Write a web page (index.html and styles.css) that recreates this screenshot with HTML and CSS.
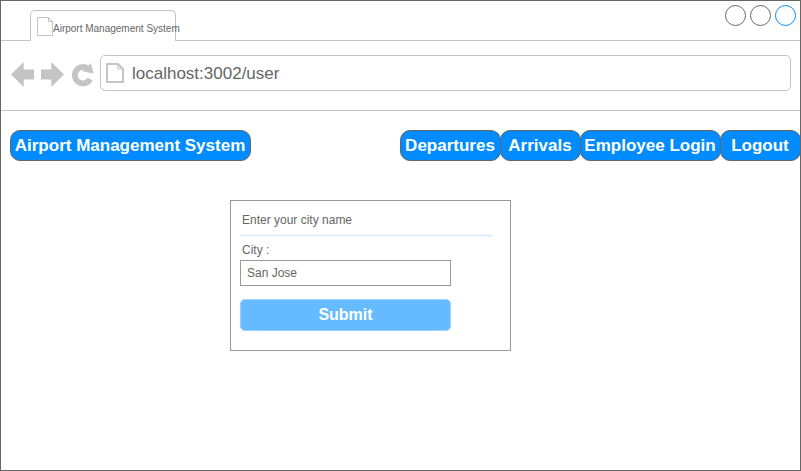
FILE: index.html
```
<!DOCTYPE html>
<html lang="en">
<head>
<meta charset="utf-8">
<title>Airport Management System</title>
<link rel="stylesheet" href="styles.css">
</head>
<body>
<div class="window">
  <header class="tabbar">
    <div class="tab">
      <svg class="tab-icon" width="18" height="20" viewBox="0 0 18 20"><path d="M1.5 .5H12.5L16.5 4.5V18.5H1.5ZM12.5 .5V4.5H16.5" fill="#fff" stroke="#c4c4c4"/></svg>
      <span class="tab-title">Airport Management System</span>
    </div>
    <div class="controls">
      <span class="dot"></span><span class="dot"></span><span class="dot active"></span>
    </div>
  </header>
  <div class="toolbar">
    <svg class="tools" width="88" height="36" viewBox="11 55 88 36" fill="#c4c4c4">
      <path d="M11 74.5L23.7 62V69.4H34V79.6H23.7V87Z"/>
      <path d="M64 74.5L51.3 62V69.4H41V79.6H51.3V87Z"/>
      <path d="M90.2 79.2A8.2 8.2 0 1 1 87.6 68.4" fill="none" stroke="#c4c4c4" stroke-width="5.8"/>
      <path d="M91 63.2L93.5 73.6L82.2 71.2Z"/>
    </svg>
    <div class="address">
      <svg class="page-icon" width="20" height="22" viewBox="0 0 20 22"><path d="M2 2H13L18 7V20H2Z" fill="#fff" stroke="#c4c4c4" stroke-width="2"/><path d="M13 2V7H18" fill="none" stroke="#c4c4c4" stroke-width="1.2"/></svg>
      <span>localhost:3002/user</span>
    </div>
  </div>
  <nav class="nav">
    <a class="pill brand">Airport Management System</a>
    <a class="pill departures">Departures</a>
    <a class="pill arrivals">Arrivals</a>
    <a class="pill login">Employee Login</a>
    <a class="pill logout">Logout</a>
  </nav>
  <form class="card">
    <div class="heading">Enter your city name</div>
    <div class="rule"></div>
    <label class="label">City :</label>
    <div class="field">San Jose</div>
    <div class="submit">Submit</div>
  </form>
</div>
</body>
</html>
```
FILE: styles.css
```
* { box-sizing: border-box; }
body {
  margin: 0;
  font-family: "Liberation Sans", Arial, sans-serif;
  color: #666;
  background: #fff;
}
svg { display: block; flex: none; }
.window {
  width: 801px;
  height: 471px;
  border: 1px solid #666;
  overflow: hidden;
}
.tabbar {
  height: 40px;
  display: flex;
  justify-content: space-between;
  align-items: flex-end;
  border-bottom: 1px solid #c4c4c4;
}
.tab {
  display: flex;
  width: 146px;
  height: 31px;
  margin: 0 0 -1px 29px;
  padding: 6px 0 0 5px;
  border: 1px solid #c4c4c4;
  border-bottom: 0;
  border-radius: 5px 5px 0 0;
  background: #fff;
}
.tab-title {
  margin-left: -1px;
  padding-top: 5px;
  font-size: 10px;
  line-height: 14px;
  white-space: nowrap;
}
.controls {
  display: flex;
  gap: 4px;
  align-self: flex-start;
  padding: 4px 4px 0 0;
}
.dot {
  width: 21px;
  height: 21px;
  border: 1px solid #666;
  border-radius: 50%;
}
.dot.active { border-color: #008cff; }
.toolbar {
  height: 70px;
  display: flex;
  padding: 14px 9px 0 10px;
  border-bottom: 1px solid #c4c4c4;
}
.address {
  flex: 1;
  display: flex;
  align-items: center;
  height: 36px;
  margin-left: 1px;
  padding: 0 0 0 4px;
  border: 1px solid #c4c4c4;
  border-radius: 5px;
  font-size: 17px;
}
.address span { margin-left: 7px; padding-top: 2px; }
.nav {
  display: flex;
  margin: 19px 0 0 9px;
}
.pill {
  flex: none;
  height: 31px;
  margin-right: -1px;
  padding-right: 1px;
  border: 1px solid #666;
  border-radius: 10px;
  background: #008cff;
  color: #fff;
  font-size: 17px;
  font-weight: bold;
  line-height: 30px;
  text-align: center;
  white-space: nowrap;
}
.brand { width: 241px; margin-right: 149px; }
.departures { width: 101px; }
.arrivals { width: 81px; }
.login { width: 141px; }
.logout { width: 81px; }
.card {
  width: 281px;
  height: 151px;
  margin: 39px 0 0 229px;
  padding: 9px;
  border: 1px solid #999;
  font-size: 12px;
}
.heading { height: 24px; padding-left: 2px; line-height: 20px; }
.rule { width: 253px; height: 3px; border: 1px solid #f0f7ff; background: #d9edff; }
.label { display: block; height: 23px; padding-left: 2px; line-height: 26px; }
.field {
  width: 211px;
  height: 26px;
  padding-left: 6px;
  border: 1px solid #999;
  line-height: 24px;
}
.submit {
  width: 211px;
  height: 32px;
  margin-top: 13px;
  border: 1px solid #99d1ff;
  border-radius: 5px;
  background: #66baff;
  color: #fff;
  font-size: 16px;
  font-weight: bold;
  line-height: 29px;
  text-align: center;
}
```
